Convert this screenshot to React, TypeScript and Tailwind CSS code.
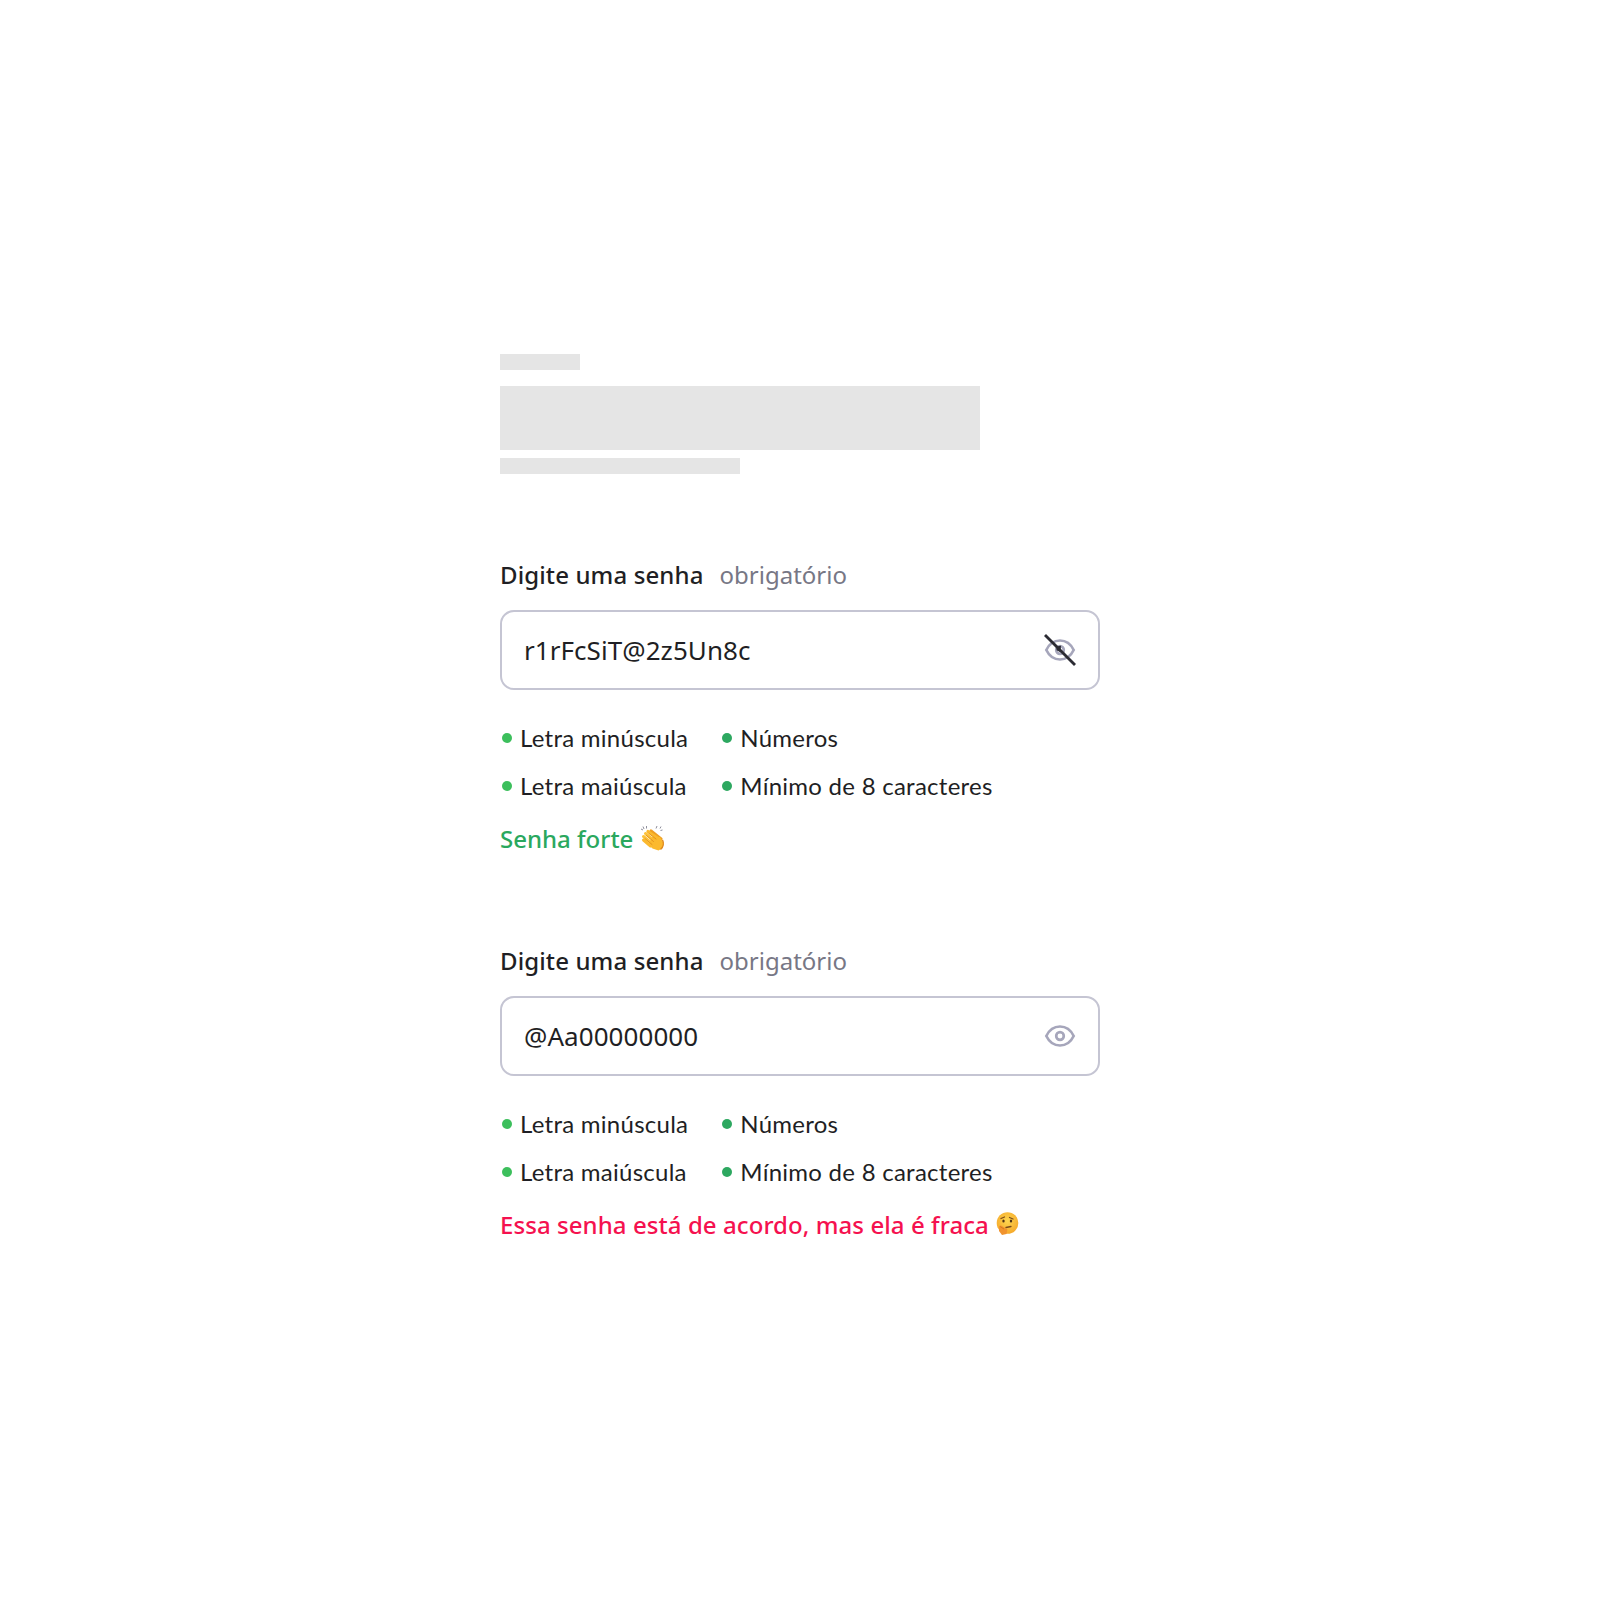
import type { ReactNode } from 'react';

const noto = { fontFamily: '"Noto Sans", sans-serif' };
const eyeOutline = 'M2.3 16C5.3 9.8 10.3 6.5 16 6.5S26.700 9.800 29.700 16C26.700 22.200 21.700 25.500 16 25.500S5.300 22.200 2.300 16Z';

function EyeOff() {
  return (
    <svg className="w-8 h-8" viewBox="0 0 32 32" fill="none">
      <path d={eyeOutline} stroke="#a6a6bb" strokeWidth="2.7" />
      <circle cx="16" cy="16" r="3.800" stroke="#a6a6bb" strokeWidth="2.7" />
      <path d="M12.500 14.500a4.200 4.200 0 0 1 4.500-2.800l-.5 6.500-4-2z" fill="#2b2b33" />
      <path d="M1 1L31 31" stroke="#2b2b33" strokeWidth="2.800" />
    </svg>
  );
}

function EyeOn() {
  return (
    <svg className="w-8 h-8" viewBox="0 0 32 32" fill="none">
      <path d={eyeOutline} stroke="#a6a6bb" strokeWidth="2.7" />
      <circle cx="16" cy="16" r="3.800" stroke="#a6a6bb" strokeWidth="2.7" />
    </svg>
  );
}

function Clap() {
  return (
    <svg className="w-[26px] h-[26px] -mt-0.5 ml-px" viewBox="0 0 26 26" fill="none">
      <g strokeLinecap="round">
        <path d="M11 6l10 8" stroke="#ee9f24" strokeWidth="3.200" />
        <path d="M8 6.500l10 7" stroke="#fbb92e" strokeWidth="3.200" />
        <path d="M5.500 8.500l9 7.500" stroke="#fcc23a" strokeWidth="3" />
        <path d="M3.500 11.500l9 7.500" stroke="#fcc23a" strokeWidth="3" />
        <path d="M3.500 15l7 6" stroke="#fbb92e" strokeWidth="3" />
      </g>
      <path d="M12 12l8 0 3.500 6-1 5-4 2.500-6-2-4-4z" fill="#fbb92e" />
      <g stroke="#dd8a1c" strokeWidth=".8" strokeLinecap="round">
        <path d="M6.500 10.500l7 6" />
        <path d="M5 13.500l7 6" />
        <path d="M9 8.500l7 5.500" />
      </g>
      <path d="M22.500 15c1.500 3 1 7-2 9.500" stroke="#e0891d" strokeWidth="1.500" />
      <path d="M3 1.500l1 2.500M6.500 1v2.500M1 4l2 1M17 1l-1 2.500M21 1.500l-1 2M22.500 5l-2 .5" stroke="#8f8f9c" strokeWidth="1" />
    </svg>
  );
}

function Thinking() {
  return (
    <svg className="w-6 h-6 -mt-0.5" viewBox="0 0 24 24">
      <defs>
        <radialGradient id="face" cx="50%" cy="40%" r="60%">
          <stop offset="0%" stopColor="#fdd64f" />
          <stop offset="100%" stopColor="#f6a92b" />
        </radialGradient>
      </defs>
      <circle cx="12.500" cy="11" r="10.800" fill="url(#face)" />
      <path d="M6 6.500l3.500-1.500M14.500 5.500l3.500 1.500" stroke="#7a4a1a" strokeWidth="1.300" fill="none" strokeLinecap="round" />
      <ellipse cx="8.500" cy="9" rx="1.200" ry="1.500" fill="#4f3216" />
      <ellipse cx="16" cy="9" rx="1.200" ry="1.500" fill="#4f3216" />
      <path d="M11 15.500l5-1" stroke="#7a4a1a" strokeWidth="1.300" strokeLinecap="round" />
      <path d="M4 14l2-.5 5 3 1.500 1-1 4.500-4.500 1-3-4z" fill="#f0932e" />
      <path d="M5 14.500l4 2.500" stroke="#d8781e" strokeWidth="1" />
    </svg>
  );
}

function Rule({ text, dot }: { text: string; dot: string }) {
  return (
    <div className="flex items-center h-6 gap-2">
      <span className={`w-2.5 h-2.5 rounded-full ml-0.5 ${dot}`} />
      <span className="text-[24px] leading-6 tracking-[0.26px] text-[#1f1f24]" style={{ fontFamily: 'Lato, sans-serif' }}>{text}</span>
    </div>
  );
}

function Field({ value, icon }: { value: string; icon: ReactNode }) {
  return (
    <div>
      <div className="flex items-center gap-4 text-[24px] leading-8" style={noto}>
        <span className="font-medium tracking-[0.12px] text-[#1f1f24]">Digite uma senha</span>
        <span className="text-[#777785]">obrigatório</span>
      </div>
      <div className="mt-[19px] h-20 border-2 border-[#c5c5d3] rounded-[14px] flex items-center justify-between pl-[22px] pr-[22px]">
        <span className="text-[26px] tracking-[0.06px] text-[#1f1f24]" style={noto}>{value}</span>
        {icon}
      </div>
    </div>
  );
}

function Rules() {
  return (
    <div className="mt-9 flex gap-8">
      <div className="flex flex-col gap-6">
        <Rule text="Letra minúscula" dot="bg-[#3cbf5c]" />
        <Rule text="Letra maiúscula" dot="bg-[#3cbf5c]" />
      </div>
      <div className="flex flex-col gap-6">
        <Rule text="Números" dot="bg-[#2da860]" />
        <Rule text="Mínimo de 8 caracteres" dot="bg-[#2da860]" />
      </div>
    </div>
  );
}

export default function App() {
  return (
    <div className="min-h-[1600px] bg-white pt-[354px] pl-[500px]">
      <div className="w-[600px]">
        {/* Skeleton header */}
        <div className="w-20 h-4 bg-[#e5e5e5]" />
        <div className="mt-4 w-[480px] h-16 bg-[#e5e5e5]" />
        <div className="mt-2 w-60 h-4 bg-[#e5e5e5]" />

        <div className="mt-[85px]">
          <Field value="r1rFcSiT@2z5Un8c" icon={<EyeOff />} />
          <Rules />
          <div className="mt-[25px] flex items-center gap-1.5 text-[24px] leading-8 font-medium text-[#2aa85e]" style={noto}>
            Senha forte <Clap />
          </div>
        </div>

        <div className="mt-[90px]">
          <Field value="@Aa00000000" icon={<EyeOn />} />
          <Rules />
          <div className="mt-[25px] flex items-center gap-1.5 text-[24px] leading-8 font-medium tracking-[0.07px] text-[#f5114f]" style={noto}>
            Essa senha está de acordo, mas ela é fraca <Thinking />
          </div>
        </div>
      </div>
    </div>
  );
}
